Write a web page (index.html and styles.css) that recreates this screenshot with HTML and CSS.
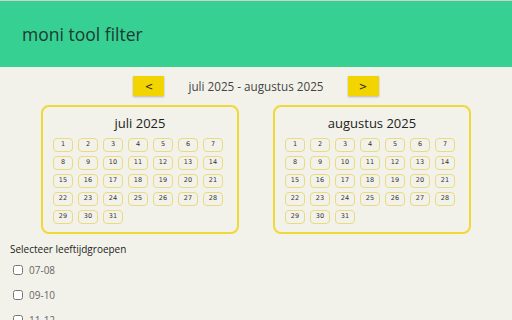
FILE: index.html
```html
<!DOCTYPE html>
<html lang="nl">
<head>
    <meta charset="UTF-8">
    <meta name="viewport" content="width=device-width, initial-scale=1.0">
    <title>moni tool filter</title>
    <link rel="stylesheet" href="styles.css">
</head>
<body>
    <header class="topbar">
        <h1>moni tool filter</h1>
    </header>

    <div class="nav">
        <button class="nav-btn">&lt;</button>
        <span class="range">juli 2025 - augustus 2025</span>
        <button class="nav-btn">&gt;</button>
    </div>

    <div class="months">
        <div class="month">
            <h2>juli 2025</h2>
            <div class="days" id="days-jul"></div>
        </div>
        <div class="month">
            <h2>augustus 2025</h2>
            <div class="days" id="days-aug"></div>
        </div>
    </div>

    <div class="groups">
        <p class="groups-title">Selecteer leeftijdgroepen</p>
        <label class="group"><input type="checkbox"> 07-08</label>
        <label class="group"><input type="checkbox"> 09-10</label>
        <label class="group"><input type="checkbox"> 11-12</label>
    </div>

    <script>
        function fillDays(id) {
            const el = document.getElementById(id);
            for (let d = 1; d <= 31; d++) {
                const cell = document.createElement('div');
                cell.className = 'day';
                cell.textContent = d;
                el.appendChild(cell);
            }
        }

        fillDays('days-jul');
        fillDays('days-aug');
    </script>
</body>
</html>
```

FILE: styles.css
```css
body {
    font-family: "Open Sans", "Noto Sans", sans-serif;
    background-color: #f3f2ea;
    margin: 0;
    color: #222;
}

.topbar {
    background-color: #36d093;
    border-top: 1px solid #c9d3cc;
    height: 66px;
    display: flex;
    align-items: center;
    padding-left: 22px;
}

.topbar h1 {
    margin: 0;
    font-size: 17.5px;
    font-weight: normal;
    color: #1d3a32;
}

.nav {
    display: flex;
    justify-content: center;
    align-items: center;
    gap: 24px;
    margin-top: 9px;
}

.nav-btn {
    width: 31px;
    height: 20px;
    border: none;
    background-color: #f2d400;
    box-shadow: 0 1px 2px rgba(0, 0, 0, 0.25);
    font-family: "DejaVu Sans", sans-serif;
    font-size: 10px;
    color: #222;
    padding: 0;
}

.range {
    font-size: 11.7px;
    color: #444;
}

.months {
    display: flex;
    justify-content: center;
    gap: 34px;
    margin-top: 9px;
}

.month {
    box-sizing: border-box;
    width: 198px;
    height: 129px;
    border: 2px solid #f0d838;
    border-radius: 8px;
    padding: 8px 10px;
}

.month h2 {
    margin: 0 0 7px;
    font-size: 13px;
    line-height: 16px;
    font-weight: normal;
    text-align: center;
    color: #222;
}

.days {
    display: grid;
    grid-template-columns: repeat(7, 20px);
    gap: 4px 5px;
}

.day {
    box-sizing: border-box;
    height: 14px;
    border: 1.5px solid #eadb80;
    border-radius: 4px;
    font-family: "DejaVu Sans", sans-serif;
    font-size: 6.5px;
    line-height: 11px;
    text-align: center;
    color: #333;
}

.groups {
    padding: 0 10px;
}

.groups-title {
    margin: 8px 0 0;
    line-height: 15px;
    font-size: 10px;
    color: #222;
}

.group {
    display: flex;
    align-items: center;
    gap: 6px;
    height: 25px;
    margin-left: 3px;
    font-size: 10px;
    color: #666;
}

.group input {
    width: 10px;
    height: 10px;
    margin: 0;
}
```
